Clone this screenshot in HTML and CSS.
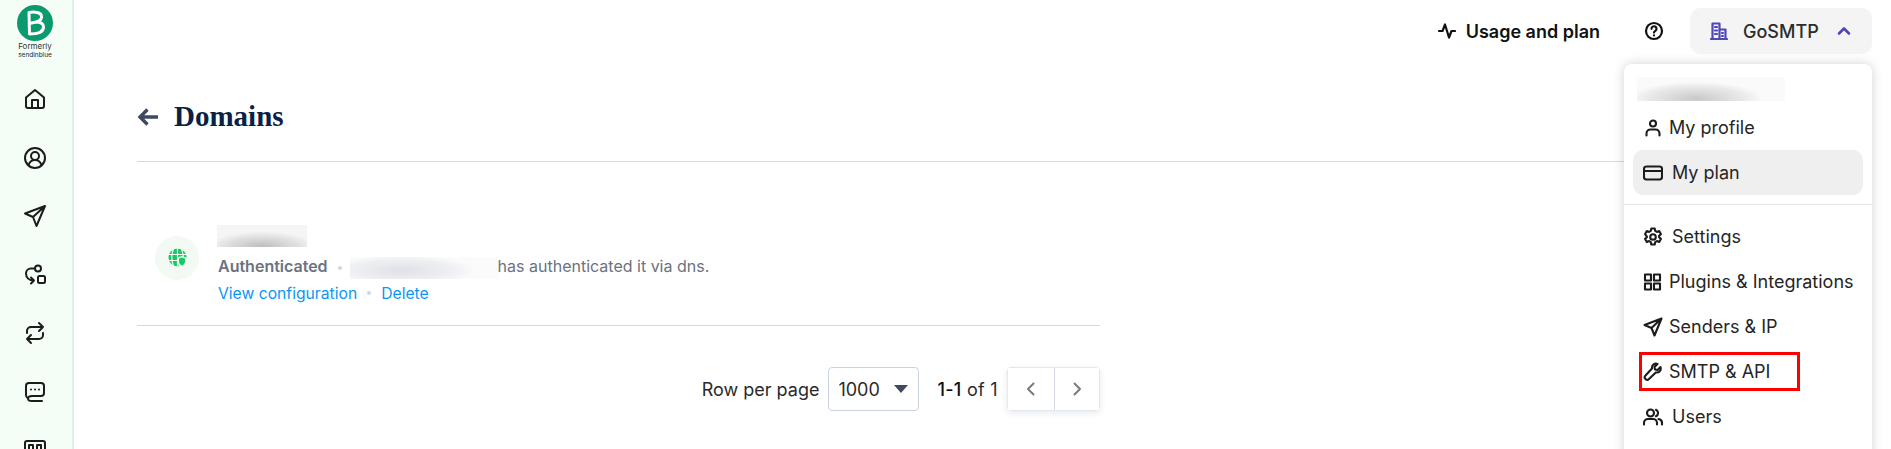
FILE: index.html
```html
<!DOCTYPE html>
<html lang="en">
<head>
    <meta charset="UTF-8">
    <title>Domains</title>
    <link rel="stylesheet" href="styles.css">
</head>
<body>
    <div class="barra-lateral">
        <div class="logo">
            <svg width="36" height="36" viewBox="0 0 36 36">
                <circle cx="18" cy="18" r="18" fill="#0b996e"/>
                <path d="M12 7.500 L12.500 29 C20 29 26.500 27.500 26.500 22 C26.500 18.500 23 17 19 17 C23 16 25 14 24.500 11 C24 7.500 18 6.500 12 7.500 Z M19 17 L12.500 18.500" fill="none" stroke="#fff" stroke-width="3" stroke-linejoin="round"/>
            </svg>
            <span class="logo-antes">Formerly</span>
            <span class="logo-nome">sendinblue</span>
        </div>
        <nav class="menu-lateral">
            <svg viewBox="0 0 24 24"><path d="M3 10.500 12 3l9 7.500V19a2 2 0 0 1-2 2H5a2 2 0 0 1-2-2z"/><path d="M9 21v-8h6v8"/></svg>
            <svg viewBox="0 0 24 24"><circle cx="12" cy="12" r="10"/><circle cx="12" cy="10" r="4"/><path d="M5.500 19c1-3 3.500-5 6.500-5s5.500 2 6.500 5"/></svg>
            <svg viewBox="0 0 24 24"><path d="M22 2 2 9.500l8 3.500 3.500 9zM22 2 10 13"/></svg>
            <svg viewBox="0 0 24 24"><circle cx="15" cy="5.500" r="3"/><rect x="15" y="13" width="7" height="7" rx="1.500"/><path d="M12 5.500H8a5 5 0 0 0-5 5c0 4 3 7 8 7M8 14.500l3 3-3 3"/></svg>
            <svg viewBox="0 0 24 24"><path d="M16 2l4 4-4 4M20 6H8a4 4 0 0 0-4 4v2M8 22l-4-4 4-4M4 18h12a4 4 0 0 0 4-4v-2"/></svg>
            <svg viewBox="0 0 24 24"><path d="M6 3h12a3 3 0 0 1 3 3v7a3 3 0 0 1-3 3H9c-3 0-4 1.500-4 2.500S6 21 9 21h10"/><path d="M6 3a3 3 0 0 0-3 3v9c0 1.500.5 2.500 2 3.500"/><path d="M8 9.500h.01M12 9.500h.01M16 9.500h.01"/></svg>
            <svg viewBox="0 0 24 24"><rect x="2" y="3" width="20" height="18" rx="2"/><rect x="6" y="7" width="4" height="6"/><rect x="14" y="7" width="4" height="6"/></svg>
        </nav>
    </div>

    <div class="conteudo">
        <header class="topo">
            <a class="uso">
                <svg width="18" height="18" viewBox="0 0 18 18"><path d="M1 9h3.500L7 2.500l4 13L13.500 9H17"/></svg>
                Usage and plan
            </a>
            <svg class="ajuda" width="20" height="20" viewBox="0 0 20 20"><circle cx="10" cy="10" r="8"/><path d="M7.500 7.800a2.500 2.500 0 1 1 3.800 2.100c-.8.500-1.300.9-1.300 1.700"/><path d="M10 14.400h.01"/></svg>
            <button class="conta">
                <svg width="18" height="18" viewBox="0 0 18 18"><path d="M1 17h16M2.500 17V1.500h7V17M9.500 7.500h6V17M5 5h2M5 8.500h2M5 12h2M12 11h1M12 14h1"/></svg>
                <span>GoSMTP</span>
                <svg class="seta-conta" width="14" height="14" viewBox="0 0 14 14"><path d="M2 9.500 7 4.500l5 5"/></svg>
            </button>
        </header>

        <main class="pagina">
            <div class="titulo">
                <svg width="22" height="20" viewBox="0 0 22 20"><path d="M21 10H3M10.500 2.500 3 10l7.500 7.500"/></svg>
                <h1>Domains</h1>
            </div>

            <div class="lista">
                <div class="dominio">
                    <div class="dominio-icone">
                        <svg width="19" height="19" viewBox="0 0 19 19"><circle cx="9.500" cy="9.500" r="9" fill="#17c964"/><path d="M0 6.500h19M0 12.500h19M9.500 0v19M5.500 1C3.500 6 3.500 13 5.500 18M13.500 1c2 5 2 12 0 17" fill="none" stroke="#f5faf5" stroke-width="1.200"/><path d="M9.500 9.500l4-1.500 5 1.500v4c0 3-2.500 5-5 5.500-2.500-.5-4-2.500-4-5.500z" fill="#f5faf5"/><path d="M11 10.500l2.500-1 3.500 1v3c0 2-1.500 3.500-3 4-1.500-.5-3-2-3-4z" fill="#17c964"/></svg>
                    </div>
                    <div class="dominio-info">
                        <div class="borrado nome-borrado"></div>
                        <div class="status">
                            <strong>Authenticated</strong>
                            <i class="ponto"></i>
                            <div class="borrado email-borrado"></div>
                            <span>has authenticated it via dns.</span>
                        </div>
                        <div class="links">
                            <a>View configuration</a>
                            <i class="ponto"></i>
                            <a>Delete</a>
                        </div>
                    </div>
                </div>

                <div class="paginacao">
                    <span>Row per page</span>
                    <div class="select">
                        1000
                        <svg width="14" height="8" viewBox="0 0 14 8"><path d="M0 0h14L7 8z"/></svg>
                    </div>
                    <span class="contagem"><b>1-1</b> of 1</span>
                    <div class="setas">
                        <button><svg width="12" height="14" viewBox="0 0 12 14"><path d="M8.500 1.500 3 7l5.500 5.500"/></svg></button>
                        <button><svg width="12" height="14" viewBox="0 0 12 14"><path d="M3.500 1.500 9 7l-5.500 5.500"/></svg></button>
                    </div>
                </div>
            </div>
        </main>
    </div>

    <!-- menu aberto da conta -->
    <div class="menu-conta">
        <div class="borrado usuario-borrado"></div>
        <a class="item">
            <svg viewBox="0 0 20 20"><circle cx="10" cy="5.500" r="3"/><path d="M3.500 17.500v-2c0-2.500 2-4 4-4h5c2 0 4 1.500 4 4v2"/></svg>
            My profile
        </a>
        <a class="item item-ativo largo">
            <svg viewBox="0 0 20 20"><rect x="1" y="3.500" width="18" height="13" rx="2.500"/><path d="M1 8h18"/></svg>
            My plan
        </a>
        <hr>
        <a class="item largo">
            <svg viewBox="0 0 20 20"><circle cx="10" cy="10" r="2.800"/><path d="M8.300 1.500h3.400l.5 2.400 1.700 1 2.300-.8 1.700 3-1.800 1.600v1.600l1.800 1.600-1.700 3-2.300-.8-1.700 1-.5 2.400H8.300l-.5-2.400-1.700-1-2.300.8-1.700-3 1.800-1.600V9.700L2.100 7.100l1.700-3 2.300.8 1.700-1z"/></svg>
            Settings
        </a>
        <a class="item">
            <svg viewBox="0 0 20 20"><rect x="2" y="2.500" width="6" height="6"/><rect x="11" y="2.500" width="6" height="6"/><rect x="2" y="11.500" width="6" height="6"/><rect x="11" y="11.500" width="6" height="6"/></svg>
            Plugins &amp; Integrations
        </a>
        <a class="item">
            <svg viewBox="0 0 20 20"><path d="M18.500 1.500 1.500 8l7 3 3 7.500zM18.500 1.500 8.500 11"/></svg>
            Senders &amp; IP
        </a>
        <a class="item item-marcado">
            <svg viewBox="0 0 20 20"><path d="M17.500 5 14.500 8l-2.500-.5-.5-2.500 3-3c-2.500-1-6 .5-5.500 4.500L2.500 13.500c-1 1-1 2.500 0 3.500s2.500 1 3.500 0l6.800-6.500c3.700.5 5.700-2.500 4.700-5.500z"/></svg>
            SMTP &amp; API
        </a>
        <a class="item largo">
            <svg viewBox="0 0 20 20"><circle cx="7.500" cy="6" r="3.500"/><path d="M1 17.500v-1.500c0-2.500 2-4 4-4h5c2 0 4 1.500 4 4v1.500M13 2.800a3.500 3.500 0 0 1 0 6.400M15.500 12c2 .3 3.500 1.800 3.500 4v1.500"/></svg>
            Users
        </a>
    </div>
</body>
</html>
```

FILE: styles.css
```css
* {
    box-sizing: border-box;
}

body {
    margin: 0;
    height: 449px;
    overflow: hidden;
    display: flex;
    position: relative;
    font-family: Inter, "Noto Sans", sans-serif;
    color: #1f1f1f;
    background-color: #fff;
}

svg {
    fill: none;
    stroke: currentColor;
    stroke-width: 2;
    stroke-linecap: round;
    stroke-linejoin: round;
    flex-shrink: 0;
}

.barra-lateral {
    width: 74px;
    height: 449px;
    flex-shrink: 0;
    overflow: hidden;
    background-color: #f5fdf7;
    border-right: 2px solid #dff1e7;
    display: flex;
    flex-direction: column;
    align-items: center;
    padding-top: 5px;
    padding-right: 2px;
}

.logo {
    height: 82px;
    flex-shrink: 0;
    display: flex;
    flex-direction: column;
    align-items: center;
}

.logo svg {
    stroke: none;
}

.logo svg path {
    stroke: #fff;
}

.logo-antes {
    font-size: 8px;
    line-height: 10px;
    color: #333;
}

.logo-nome {
    font-size: 6.500px;
    line-height: 9px;
    color: #222;
}

.menu-lateral {
    display: flex;
    flex-direction: column;
    flex-shrink: 0;
    gap: 34.500px;
    color: #1c1c1c;
}

.menu-lateral svg {
    width: 24px;
    height: 24px;
    display: block;
}

.conteudo {
    flex: 1;
    min-width: 0;
}

.topo {
    height: 62px;
    padding: 8px 19px 8px 0;
    display: flex;
    justify-content: flex-end;
    align-items: center;
}

.uso {
    display: flex;
    align-items: center;
    gap: 10px;
    font-size: 18px;
    font-weight: 600;
    color: #111;
}

.uso svg {
    stroke-width: 2.200;
}

.ajuda {
    margin-left: 44px;
    color: #111;
    stroke-width: 2.200;
}

.conta {
    margin-left: 26px;
    width: 182px;
    height: 46px;
    border: none;
    border-radius: 10px;
    background-color: #f4f4f4;
    font-family: inherit;
    font-size: 18px;
    font-weight: 500;
    color: #2c2c2c;
    display: flex;
    align-items: center;
    padding: 0 20px;
}

.conta svg {
    color: #4f46b8;
    stroke-width: 2.200;
}

.conta .seta-conta {
    stroke-width: 2.600;
}

.conta span {
    margin-left: 15px;
    margin-right: 18px;
}

.pagina {
    padding-left: 63px;
    padding-right: 41px;
}

.titulo {
    display: flex;
    align-items: center;
    gap: 16px;
    height: 100px;
    padding: 18px 0 8px;
    border-bottom: 1px solid #d5d9e3;
    color: #3f4a60;
}

.titulo svg {
    stroke-width: 3.400;
    stroke-linecap: butt;
    stroke-linejoin: miter;
}

.titulo h1 {
    margin: 0 0 0 -1px;
    font-family: "Liberation Serif", serif;
    font-size: 29px;
    font-weight: 700;
    color: #0b1f47;
}

.lista {
    width: 963px;
}

.dominio {
    display: flex;
    align-items: center;
    gap: 18px;
    padding: 63px 0 21px 18px;
    border-bottom: 1px solid #d5d9e3;
}

.dominio-icone {
    width: 44px;
    height: 44px;
    margin-top: -14px;
    border-radius: 50%;
    background-color: #f3f9f3;
    display: flex;
    justify-content: center;
    align-items: center;
}

.dominio-icone svg {
    stroke: none;
}

.nome-borrado {
    width: 90px;
    height: 22px;
    margin-bottom: 8px;
    background: radial-gradient(ellipse 60% 70% at 50% 100%, #bdbdbd, #e2e2e2 70%, #f5f5f5);
}

.status,
.links {
    display: flex;
    align-items: center;
    height: 22px;
    font-size: 16px;
    color: #6b7280;
    margin-left: 1px;
}

.status strong {
    font-weight: 600;
}

.status span {
    white-space: nowrap;
}

.ponto {
    width: 4px;
    height: 4px;
    border-radius: 50%;
    background-color: #cfd6e0;
}

.status .ponto {
    margin: 3px 8px 0 10px;
}

.email-borrado {
    width: 148px;
    height: 22px;
    margin-top: 4px;
    background: radial-gradient(ellipse 50% 70% at 35% 60%, #e0e1e6, #eff0f3 70%, #fbfbfc);
}

.links {
    margin-top: 5px;
    font-size: 15.700px;
    color: #0b96f5;
}

.links .ponto {
    margin: 0 10px;
}

.paginacao {
    display: flex;
    justify-content: flex-end;
    align-items: center;
    margin-top: 41px;
    font-size: 18px;
    color: #2a2a2a;
}

.select {
    width: 91px;
    height: 44px;
    margin-left: 9px;
    padding: 0 10px 0 9px;
    border: 1px solid #ccd3e0;
    border-radius: 4px;
    display: flex;
    justify-content: space-between;
    align-items: center;
}

.select svg {
    stroke: none;
    fill: #3f4a60;
}

.contagem {
    margin-left: 18px;
    letter-spacing: 0.300px;
}

.contagem b {
    font-weight: 500;
    color: #111;
}

.setas {
    margin-left: 9px;
    display: flex;
    border: 1px solid #e3e7ee;
    border-radius: 4px;
    box-shadow: 0 2px 6px rgba(30, 40, 70, 0.1);
}

.setas button {
    width: 46px;
    height: 42px;
    padding: 0;
    border: none;
    background-color: #fff;
    color: #7a7a7a;
    display: flex;
    justify-content: center;
    align-items: center;
}

.setas button + button {
    width: 45px;
    border-left: 1px solid #d5d9e3;
}

.menu-conta {
    position: absolute;
    top: 64px;
    left: 1624px;
    width: 248px;
    height: 400px;
    padding: 13px 9px 0;
    background-color: #fff;
    border-radius: 8px;
    box-shadow: 0 0 12px rgba(0, 0, 0, 0.18);
}

.usuario-borrado {
    width: 148px;
    height: 24px;
    margin-left: 4px;
    background: radial-gradient(ellipse 45% 70% at 40% 90%, #c9c9c9, #ebebeb 75%, #fafafa);
}

.item {
    position: relative;
    height: 45px;
    padding-left: 10px;
    display: flex;
    align-items: center;
    gap: 6px;
    font-size: 18px;
    color: #252525;
    white-space: nowrap;
}

.item svg {
    width: 20px;
    height: 20px;
    stroke-width: 2.100;
    color: #1c1c1c;
}

.largo {
    gap: 9px;
}

.item-ativo {
    background-color: #efefef;
    border-radius: 10px;
}

.usuario-borrado + .item {
    margin-top: 4px;
}

.item-marcado::after {
    content: "";
    position: absolute;
    box-sizing: border-box;
    left: 6px;
    top: 3px;
    width: 161px;
    height: 39px;
    border: 3px solid #f00;
}

hr {
    margin: 9px -9px 9px;
    border: none;
    border-top: 1px solid #e4e6ea;
}
```
